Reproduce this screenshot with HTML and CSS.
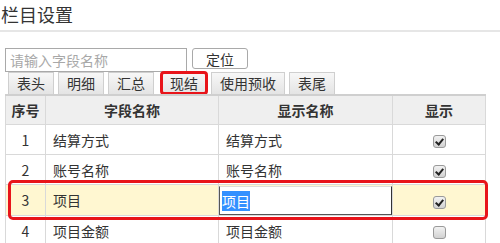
FILE: index.html
```html
<!DOCTYPE html>
<html lang="zh">
<head>
    <meta charset="UTF-8">
    <title>栏目设置</title>
    <link rel="stylesheet" href="styles.css">
</head>
<body>
    <div class="page">
        <h2 class="title">栏目设置</h2>

        <div class="search">
            <input type="text" class="search-input" placeholder="请输入字段名称">
            <button class="locate-btn">定位</button>
        </div>

        <div class="tabs">
            <span class="tab">表头</span>
            <span class="tab">明细</span>
            <span class="tab">汇总</span>
            <span class="tab tab-marked">现结</span>
            <span class="tab">使用预收</span>
            <span class="tab">表尾</span>
        </div>

        <div class="table-wrap">
            <table class="grid">
                <colgroup>
                    <col style="width: 40px">
                    <col style="width: 173px">
                    <col style="width: 174px">
                    <col style="width: 93px">
                </colgroup>
                <thead>
                    <tr>
                        <th>序号</th>
                        <th>字段名称</th>
                        <th>显示名称</th>
                        <th>显示</th>
                    </tr>
                </thead>
                <tbody>
                    <tr>
                        <td class="col-no">1</td>
                        <td>结算方式</td>
                        <td>结算方式</td>
                        <td class="col-show"><span class="check on"></span></td>
                    </tr>
                    <tr>
                        <td class="col-no">2</td>
                        <td>账号名称</td>
                        <td>账号名称</td>
                        <td class="col-show"><span class="check on"></span></td>
                    </tr>
                    <tr class="row-active">
                        <td class="col-no">3</td>
                        <td>项目</td>
                        <td class="cell-edit"><div class="edit-box"><span class="selected">项目</span></div></td>
                        <td class="col-show"><span class="check on"></span></td>
                    </tr>
                    <tr>
                        <td class="col-no">4</td>
                        <td>项目金额</td>
                        <td>项目金额</td>
                        <td class="col-show"><span class="check"></span></td>
                    </tr>
                </tbody>
            </table>
            <div class="row-mark"></div>
        </div>
    </div>
</body>
</html>
```

FILE: styles.css
```css
body {
    margin: 0;
    font-family: "Noto Sans CJK SC", "Noto Sans", sans-serif;
    color: #333;
    background: #fff;
    overflow: hidden;
}

.page {
    width: 500px;
}

.title {
    margin: 0;
    padding: 0 0 0 1px;
    height: 30px;
    line-height: 28px;
    font-size: 18px;
    font-weight: normal;
    color: #333;
    border-bottom: 2px solid #e6e6e6;
}

.search {
    display: flex;
    align-items: flex-start;
    margin-top: 16px;
    padding-left: 5px;
    height: 24px;
}

.search-input {
    width: 182px;
    height: 24px;
    box-sizing: border-box;
    border: 1px solid #a9a9a9;
    padding: 0 4px;
    font-family: inherit;
    font-size: 14px;
    color: #333;
    outline: none;
}

    .search-input::placeholder {
        color: #a8a8a8;
    }

.locate-btn {
    margin-left: 5px;
    width: 56px;
    height: 21px;
    padding: 0;
    border: 1px solid #a9a9a9;
    border-radius: 3px;
    background: #fff;
    font-family: inherit;
    font-size: 14px;
    line-height: 18px;
    color: #333;
}

.tabs {
    display: flex;
    gap: 4px;
    padding-left: 8px;
    height: 22px;
}

.tab {
    box-sizing: border-box;
    height: 22px;
    padding: 0 8px;
    min-width: 45px;
    text-align: center;
    font-size: 14px;
    line-height: 20px;
    color: #333;
    background: linear-gradient(#f7f7f7, #e4e4e4);
    border: 1px solid #cfcfcf;
    border-bottom: none;
}

.tab-marked {
    margin-left: 3px;
    outline: 3px solid #e8141a;
    outline-offset: -2px;
    border-radius: 3px;
}

.table-wrap {
    position: relative;
    padding-left: 5px;
}

.grid {
    width: 480px;
    table-layout: fixed;
    border-collapse: collapse;
    border-top: 2px solid #cfcfcf;
    font-size: 14px;
    line-height: 18px;
}

    .grid th,
    .grid td {
        border: 1px solid #d9d9d9;
        height: 29px;
        padding: 0 7px;
        text-align: left;
        white-space: nowrap;
        overflow: hidden;
    }

    .grid th {
        height: 28px;
        padding: 0;
        background: #efefef;
        font-weight: bold;
        text-align: center;
    }

    .grid td {
        background: #fff;
    }

    .grid .col-no {
        padding: 0;
        text-align: center;
    }

    .grid .col-show {
        text-align: center;
    }

    .grid .row-active td {
        background: #fff7d1;
        height: 30px;
    }

    .grid .row-active .cell-edit {
        padding: 0;
    }

.edit-box {
    box-sizing: border-box;
    height: 29px;
    margin-top: 1px;
    background: #fff;
    border: 1px solid #555;
    border-top-color: #ddd;
    border-right-color: #333;
    padding: 4px 2px;
    line-height: 20px;
}

.selected {
    background: #3390ff;
    color: #fff;
}

.check {
    display: inline-block;
    width: 11px;
    height: 11px;
    border: 1px solid #9a9a9a;
    border-radius: 3px;
    background: linear-gradient(#f2f2f2, #d2d2d2);
    vertical-align: middle;
    position: relative;
}

    .check.on::after {
        content: "";
        position: absolute;
        left: 3px;
        top: 1px;
        width: 3px;
        height: 6px;
        border: solid #222;
        border-width: 0 2px 2px 0;
        transform: rotate(40deg);
    }

.row-mark {
    position: absolute;
    left: 8px;
    top: 86px;
    width: 474px;
    height: 34px;
    border: 3px solid #e8141a;
    border-radius: 5px;
    pointer-events: none;
}
```
